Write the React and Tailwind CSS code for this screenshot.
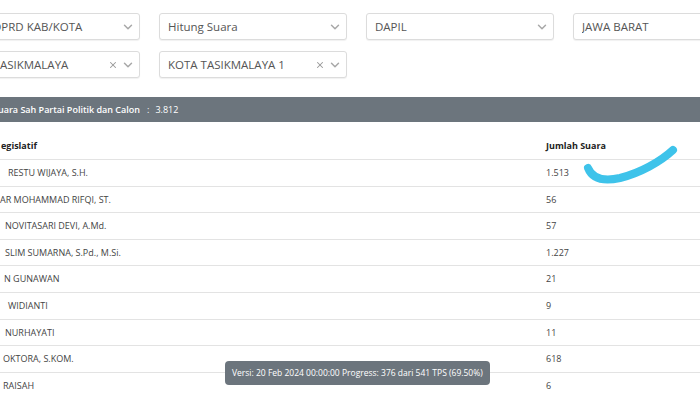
import { ChevronDown, X } from "lucide-react";

const rows = [
  { name: "RESTU WIJAYA, S.H.", pad: "pl-[8px]", votes: "1.513" },
  { name: "AR MOHAMMAD RIFQI, ST.", pad: "pl-[0px]", votes: "56" },
  { name: "NOVITASARI DEVI, A.Md.", pad: "pl-[5px]", votes: "57" },
  { name: "SLIM SUMARNA, S.Pd., M.Si.", pad: "pl-[5px]", votes: "1.227" },
  { name: "N GUNAWAN", pad: "pl-[4px]", votes: "21" },
  { name: "WIDIANTI", pad: "pl-[8px]", votes: "9" },
  { name: "NURHAYATI", pad: "pl-[5px]", votes: "11" },
  { name: "OKTORA, S.KOM.", pad: "pl-[3px]", votes: "618" },
  { name: "RAISAH", pad: "pl-[3px]", votes: "6" },
];

function Select({ value, clearable, pad = "pl-2" }) {
  return (
    <div className={`flex h-[27px] items-center rounded-[3px] border border-[#dcdcdc] bg-white pr-[4px] shadow-[0_1px_1px_rgba(0,0,0,0.06)] ${pad}`}>
      <span className="flex-1 truncate text-[11.5px] text-[#555]">{value}</span>
      {clearable && <X size={10} strokeWidth={2.5} className="mr-[3px] text-[#999]" />}
      <ChevronDown size={14} strokeWidth={2.5} className="text-[#a8a8a8]" />
    </div>
  );
}

export default function App() {
  return (
    <div
      className="relative h-[393px] w-[700px] overflow-hidden bg-white"
      style={{ fontFamily: '"Open Sans", "Noto Sans", sans-serif' }}
    >
      <div className="ml-[-48px] w-[809px] pt-[13px]">
        <div className="grid grid-cols-[188px_188px_188px_188px] gap-x-[19px] gap-y-[11px]">
          <Select value="DPRD KAB/KOTA" pad="pl-[40px]" />
          <Select value="Hitung Suara" />
          <Select value="DAPIL" />
          <Select value="JAWA BARAT" />
          <Select value="KOTA TASIKMALAYA" clearable />
          <Select value="KOTA TASIKMALAYA 1" clearable />
        </div>
      </div>

      <div className="mt-[19px] flex h-[25px] items-center bg-[#6c757d] text-[9px] font-semibold text-white">
        <span className="ml-[-2px]">uara Sah Partai Politik dan Calon</span>
        <span className="ml-[7px] font-normal">:</span>
        <span className="ml-[6px] font-normal">3.812</span>
      </div>

      <div className="text-[9px] text-[#444]">
        <div className="flex h-[38px] items-end border-b border-[#e3e3e3] pb-[7px] font-bold text-[#222]">
          <span className="w-[546px] pl-[1px]">egislatif</span>
          <span>Jumlah Suara</span>
        </div>
        {rows.map((r) => (
          <div key={r.name} className="flex h-[26.6px] items-center border-b border-[#e3e3e3]">
            <span className={`w-[546px] ${r.pad}`}>{r.name}</span>
            <span>{r.votes}</span>
          </div>
        ))}
      </div>

      <svg className="absolute left-[580px] top-[140px]" width="110" height="50" viewBox="0 0 110 50">
        <path
          d="M8 28 C 12 38, 22 42, 40 38 C 60 33, 80 22, 93 10"
          fill="none"
          stroke="#3ec3ea"
          strokeWidth="8"
          strokeLinecap="round"
        />
      </svg>

      <div className="absolute left-[225px] top-[361px] flex h-[24px] w-[265px] items-center rounded-[4px] bg-[#6c757d] px-[7px] text-[8.5px] whitespace-nowrap text-white">
        Versi: 20 Feb 2024 00:00:00 Progress: 376 dari 541 TPS (69.50%)
      </div>
    </div>
  );
}
